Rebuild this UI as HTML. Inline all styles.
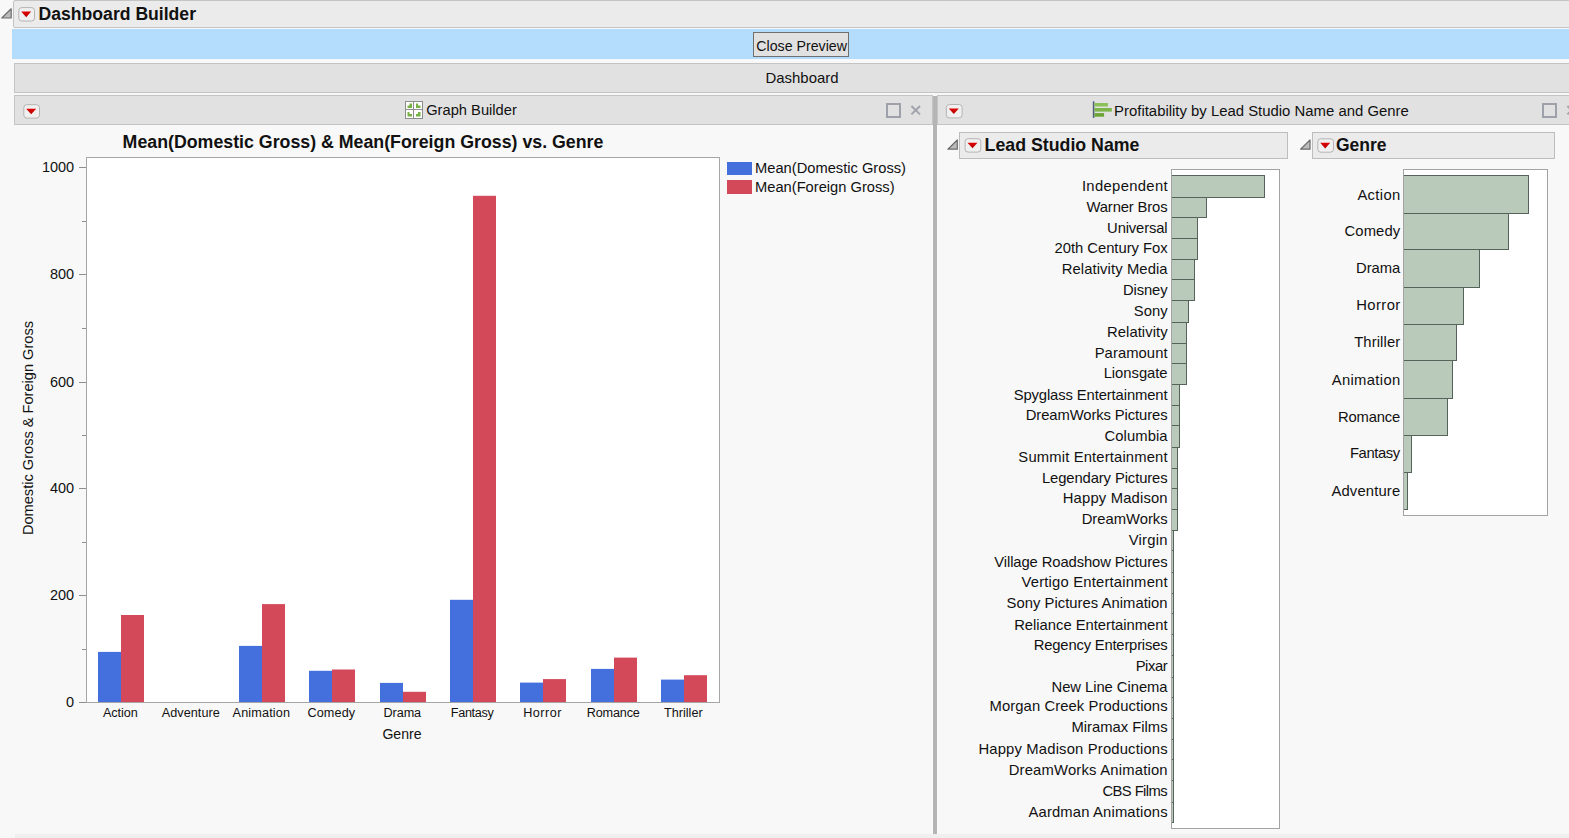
<!DOCTYPE html>
<html><head><meta charset="utf-8"><title>Dashboard Builder</title>
<style>
html,body{margin:0;padding:0;}
body{width:1569px;height:838px;overflow:hidden;background:#f8f8f8;font-family:"Liberation Sans", sans-serif;color:#111;position:relative;}
.abs{position:absolute;}
.t{position:absolute;white-space:nowrap;line-height:1;}
.bar{position:absolute;box-sizing:border-box;border:1px solid #c4c4c4;}
.hb{position:absolute;box-sizing:border-box;background:#b9c9ba;border:1px solid #56635a;}
.lab{position:absolute;white-space:nowrap;line-height:1;text-align:right;font-size:14.8px;}
</style></head><body>
<svg width="0" height="0" style="position:absolute"><defs><linearGradient id="rg" x1="0" y1="0" x2="0" y2="1"><stop offset="0" stop-color="#e40000"/><stop offset="1" stop-color="#b00000"/></linearGradient></defs></svg>

<div class="bar" style="left:13px;top:0;width:1570px;height:28px;background:#ebebeb;border-radius:2px"></div>
<svg class="abs" style="left:0px;top:7px" width="14" height="14" viewBox="0 0 14 14"><path d="M11.20 1.80V11.00H1.80Z" fill="#bcbcbc" stroke="#6c6c6c" stroke-width="1.2" stroke-linejoin="round"/></svg>
<svg class="abs" style="left:17px;top:6px" width="21" height="18" viewBox="0 0 21 18"><rect x="1.80" y="1.60" width="15.70" height="13.40" rx="3" fill="#f0f0f0" stroke="#b4b4b4"/><path d="M4.20 5.60H14.20L9.20 11.20Z" fill="url(#rg)"/></svg>
<div class="t" style="left:38.6px;top:6.4px;font-size:17.6px;font-weight:bold;">Dashboard Builder</div>
<div class="abs" style="left:12px;top:29px;width:1557px;height:30px;background:#b3dcfd"></div>
<div class="abs" style="left:753px;top:32px;width:96px;height:25px;box-sizing:border-box;border:1px solid #707070;background:#e1e1e1"></div>
<div class="t" style="left:756.3px;top:39.4px;font-size:14.2px;">Close Preview</div>
<div class="bar" style="left:14px;top:63px;width:1570px;height:30px;background:#e1e1e1"></div>
<div class="t" style="left:765.5px;top:71.1px;font-size:14.95px;">Dashboard</div>
<div class="bar" style="left:14px;top:95px;width:919px;height:30px;background:#e1e1e1"></div>
<svg class="abs" style="left:22px;top:103px" width="21" height="18" viewBox="0 0 21 18"><rect x="1.80" y="1.70" width="15.70" height="13.40" rx="3" fill="#f0f0f0" stroke="#b4b4b4"/><path d="M4.20 5.70H14.20L9.20 11.30Z" fill="url(#rg)"/></svg>
<svg class="abs" style="left:405px;top:101px" width="18" height="18" viewBox="0 0 18 18">
<rect x="0.5" y="0.5" width="17" height="17" fill="#fff" stroke="#8c8c8c"/>
<path d="M8.5 0.5V17.5M0.5 8.5H17.5" stroke="#8c8c8c" stroke-width="1"/>
<path d="M2.5 7V4.5H4.5V2.5H7V7Z" fill="#78b043"/>
<path d="M11 2.5H13V4.5H15.5V7H11Z" fill="#78b043"/>
<path d="M2.5 11H4.5V13H7V15.5H2.5Z" fill="#78b043"/>
<path d="M11 15.5V13H13V11H15.5V15.5Z" fill="#78b043"/>
</svg>
<div class="t" style="left:426.2px;top:102.5px;font-size:14.7px;">Graph Builder</div>
<div class="abs" style="left:886px;top:103px;width:15px;height:15px;box-sizing:border-box;border:2px solid #9ea1aa"></div>
<svg class="abs" style="left:910px;top:104px" width="12" height="12" viewBox="0 0 12 12"><path d="M1.4 2L10 10.4M10 2L1.4 10.4" stroke="#a1a4ac" stroke-width="2" fill="none"/></svg>
<div class="abs" style="left:932px;top:125px;width:6px;height:709px;background:#fbfbfb"></div>
<div class="abs" style="left:933px;top:96px;width:4px;height:738px;background:#b5b5b5"></div>
<div class="bar" style="left:937px;top:95px;width:700px;height:30px;background:#e1e1e1"></div>
<svg class="abs" style="left:944px;top:103px" width="21" height="18" viewBox="0 0 21 18"><rect x="2.40" y="1.50" width="15.70" height="13.40" rx="3" fill="#f0f0f0" stroke="#b4b4b4"/><path d="M4.80 5.50H14.80L9.80 11.10Z" fill="url(#rg)"/></svg>
<svg class="abs" style="left:1092px;top:101px" width="21" height="18" viewBox="0 0 21 18">
<rect x="0.8" y="0.3" width="1.6" height="16.6" fill="#4f607a"/>
<rect x="2.4" y="2" width="13.5" height="3.5" fill="#8cc15a"/>
<rect x="2.4" y="7" width="17.4" height="3.6" fill="#7db548"/>
<rect x="2.4" y="12.1" width="9.7" height="3.6" fill="#6ba535"/>
</svg>
<div class="t" style="left:1114.1px;top:103.6px;font-size:14.9px;">Profitability by Lead Studio Name and Genre</div>
<div class="abs" style="left:1542px;top:103px;width:15px;height:15px;box-sizing:border-box;border:2px solid #9ea1aa"></div>
<svg class="abs" style="left:1566px;top:104px" width="12" height="12" viewBox="0 0 12 12"><path d="M1.4 2L10 10.4M10 2L1.4 10.4" stroke="#a1a4ac" stroke-width="2" fill="none"/></svg>
<div class="t" style="left:122.6px;top:133.6px;font-size:17.78px;font-weight:bold;">Mean(Domestic Gross) &amp; Mean(Foreign Gross) vs. Genre</div>
<div class="abs" style="left:86px;top:157px;width:634px;height:545.5px;box-sizing:border-box;background:#fff;border:1px solid #a6a6a6"></div>
<div class="abs" style="left:79px;top:702px;width:7px;height:1px;background:#8f8f8f"></div>
<div class="lab" style="left:20px;width:54.2px;top:695.2px;font-size:14.5px">0</div>
<div class="abs" style="left:82px;top:649px;width:4px;height:1px;background:#8f8f8f"></div>
<div class="abs" style="left:79px;top:595px;width:7px;height:1px;background:#8f8f8f"></div>
<div class="lab" style="left:20px;width:54.2px;top:588.2px;font-size:14.5px">200</div>
<div class="abs" style="left:82px;top:542px;width:4px;height:1px;background:#8f8f8f"></div>
<div class="abs" style="left:79px;top:488px;width:7px;height:1px;background:#8f8f8f"></div>
<div class="lab" style="left:20px;width:54.2px;top:481.2px;font-size:14.5px">400</div>
<div class="abs" style="left:82px;top:435px;width:4px;height:1px;background:#8f8f8f"></div>
<div class="abs" style="left:79px;top:382px;width:7px;height:1px;background:#8f8f8f"></div>
<div class="lab" style="left:20px;width:54.2px;top:375.2px;font-size:14.5px">600</div>
<div class="abs" style="left:82px;top:328px;width:4px;height:1px;background:#8f8f8f"></div>
<div class="abs" style="left:79px;top:274px;width:7px;height:1px;background:#8f8f8f"></div>
<div class="lab" style="left:20px;width:54.2px;top:267.2px;font-size:14.5px">800</div>
<div class="abs" style="left:82px;top:221px;width:4px;height:1px;background:#8f8f8f"></div>
<div class="abs" style="left:79px;top:167px;width:7px;height:1px;background:#8f8f8f"></div>
<div class="lab" style="left:20px;width:54.2px;top:160.2px;font-size:14.5px">1000</div>
<svg class="abs" style="left:0;top:0" width="940" height="838" viewBox="0 0 940 838">
<rect x="98" y="651.9" width="23" height="50.1" fill="#4370dc"/>
<rect x="121" y="615.0" width="23" height="87.0" fill="#d4495a"/>
<rect x="239" y="645.9" width="23" height="56.1" fill="#4370dc"/>
<rect x="262" y="604.1" width="23" height="97.9" fill="#d4495a"/>
<rect x="309" y="670.8" width="23" height="31.2" fill="#4370dc"/>
<rect x="332" y="669.5" width="23" height="32.5" fill="#d4495a"/>
<rect x="380" y="682.9" width="23" height="19.1" fill="#4370dc"/>
<rect x="403" y="691.8" width="23" height="10.2" fill="#d4495a"/>
<rect x="450" y="599.8" width="23" height="102.2" fill="#4370dc"/>
<rect x="473" y="195.8" width="23" height="506.2" fill="#d4495a"/>
<rect x="520" y="682.6" width="23" height="19.4" fill="#4370dc"/>
<rect x="543" y="679.1" width="23" height="22.9" fill="#d4495a"/>
<rect x="591" y="668.9" width="23" height="33.1" fill="#4370dc"/>
<rect x="614" y="657.6" width="23" height="44.4" fill="#d4495a"/>
<rect x="661" y="679.6" width="23" height="22.4" fill="#4370dc"/>
<rect x="684" y="675.2" width="23" height="26.8" fill="#d4495a"/>
</svg>
<div class="t" style="left:80.27px;width:80px;text-align:center;top:707.2px;font-size:12.65px;letter-spacing:-0.06px">Action</div>
<div class="t" style="left:150.82px;width:80px;text-align:center;top:707.2px;font-size:12.65px;letter-spacing:0.04px">Adventure</div>
<div class="t" style="left:221.38px;width:80px;text-align:center;top:707.2px;font-size:12.65px;letter-spacing:0.16px">Animation</div>
<div class="t" style="left:291.36px;width:80px;text-align:center;top:707.2px;font-size:12.65px;letter-spacing:0.12px">Comedy</div>
<div class="t" style="left:362.27px;width:80px;text-align:center;top:707.2px;font-size:12.65px;letter-spacing:-0.05px">Drama</div>
<div class="t" style="left:432.13px;width:80px;text-align:center;top:707.2px;font-size:12.65px;letter-spacing:-0.34px">Fantasy</div>
<div class="t" style="left:502.55px;width:80px;text-align:center;top:707.2px;font-size:12.65px;letter-spacing:0.50px">Horror</div>
<div class="t" style="left:573.22px;width:80px;text-align:center;top:707.2px;font-size:12.65px;letter-spacing:-0.16px">Romance</div>
<div class="t" style="left:643.31px;width:80px;text-align:center;top:707.2px;font-size:12.65px;letter-spacing:0.02px">Thriller</div>
<div class="t" style="left:382.4px;top:726.9px;font-size:14.1px;">Genre</div>
<div class="t" style="left:27.5px;top:428.4px;font-size:14.6px;transform:translate(-50%,-50%) rotate(-90deg);">Domestic Gross &amp; Foreign Gross</div>
<div class="abs" style="left:727px;top:162px;width:25px;height:13px;background:#4370dc"></div>
<div class="abs" style="left:727px;top:180px;width:25px;height:14px;background:#d4495a"></div>
<div class="t" style="left:755px;top:160.5px;font-size:14.7px;">Mean(Domestic Gross)</div>
<div class="t" style="left:755px;top:180.2px;font-size:14.7px;">Mean(Foreign Gross)</div>
<div class="bar" style="left:959px;top:132px;width:329px;height:27px;background:#ebebeb;border-color:#bdbdbd"></div>
<svg class="abs" style="left:946px;top:138px" width="14" height="14" viewBox="0 0 14 14"><path d="M11.30 2.00V11.20H1.90Z" fill="#bcbcbc" stroke="#6c6c6c" stroke-width="1.2" stroke-linejoin="round"/></svg>
<svg class="abs" style="left:963px;top:137px" width="21" height="18" viewBox="0 0 21 18"><rect x="2.10" y="1.70" width="15.70" height="13.40" rx="3" fill="#f0f0f0" stroke="#b4b4b4"/><path d="M4.50 5.70H14.50L9.50 11.30Z" fill="url(#rg)"/></svg>
<div class="t" style="left:984.6px;top:137.4px;font-size:17.75px;font-weight:bold;">Lead Studio Name</div>
<div class="abs" style="left:1171px;top:169px;width:109px;height:660px;background:#fff"></div>
<div class="hb" style="left:1171px;top:175px;width:94px;height:23px"></div>
<div class="lab" style="left:940px;width:227.94px;top:178.5px;letter-spacing:0.34px;">Independent</div>
<div class="hb" style="left:1171px;top:197px;width:36px;height:21px"></div>
<div class="lab" style="left:940px;width:227.46px;top:199.5px;letter-spacing:-0.14px;">Warner Bros</div>
<div class="hb" style="left:1171px;top:217px;width:27px;height:22px"></div>
<div class="lab" style="left:940px;width:227.45px;top:220.6px;letter-spacing:-0.15px;">Universal</div>
<div class="hb" style="left:1171px;top:238px;width:27px;height:22px"></div>
<div class="lab" style="left:940px;width:227.57px;top:240.6px;letter-spacing:-0.03px;">20th Century Fox</div>
<div class="hb" style="left:1171px;top:259px;width:24px;height:21px"></div>
<div class="lab" style="left:940px;width:227.70px;top:262.4px;letter-spacing:0.10px;">Relativity Media</div>
<div class="hb" style="left:1171px;top:279px;width:24px;height:22px"></div>
<div class="lab" style="left:940px;width:227.49px;top:283.4px;letter-spacing:-0.11px;">Disney</div>
<div class="hb" style="left:1171px;top:300px;width:18px;height:23px"></div>
<div class="lab" style="left:940px;width:227.64px;top:303.9px;letter-spacing:0.04px;">Sony</div>
<div class="hb" style="left:1171px;top:322px;width:16px;height:22px"></div>
<div class="lab" style="left:940px;width:227.66px;top:324.8px;letter-spacing:0.06px;">Relativity</div>
<div class="hb" style="left:1171px;top:343px;width:16px;height:21px"></div>
<div class="lab" style="left:940px;width:227.67px;top:345.5px;letter-spacing:0.07px;">Paramount</div>
<div class="hb" style="left:1171px;top:363px;width:16px;height:22px"></div>
<div class="lab" style="left:940px;width:227.57px;top:365.9px;letter-spacing:-0.03px;">Lionsgate</div>
<div class="hb" style="left:1171px;top:384px;width:9px;height:22px"></div>
<div class="lab" style="left:940px;width:227.49px;top:387.5px;letter-spacing:-0.11px;">Spyglass Entertainment</div>
<div class="hb" style="left:1171px;top:405px;width:9px;height:21px"></div>
<div class="lab" style="left:940px;width:227.50px;top:408.3px;letter-spacing:-0.10px;">DreamWorks Pictures</div>
<div class="hb" style="left:1171px;top:425px;width:9px;height:23px"></div>
<div class="lab" style="left:940px;width:227.70px;top:428.7px;letter-spacing:0.10px;">Columbia</div>
<div class="hb" style="left:1171px;top:447px;width:7px;height:22px"></div>
<div class="lab" style="left:940px;width:227.75px;top:449.6px;letter-spacing:0.15px;">Summit Entertainment</div>
<div class="hb" style="left:1171px;top:468px;width:7px;height:21px"></div>
<div class="lab" style="left:940px;width:227.49px;top:470.6px;letter-spacing:-0.11px;">Legendary Pictures</div>
<div class="hb" style="left:1171px;top:488px;width:7px;height:22px"></div>
<div class="lab" style="left:940px;width:227.77px;top:490.8px;letter-spacing:0.17px;">Happy Madison</div>
<div class="hb" style="left:1171px;top:509px;width:7px;height:22px"></div>
<div class="lab" style="left:940px;width:227.59px;top:512.4px;letter-spacing:-0.01px;">DreamWorks</div>
<div class="hb" style="left:1171px;top:530px;width:3px;height:21px"></div>
<div class="lab" style="left:940px;width:227.87px;top:533.1px;letter-spacing:0.27px;">Virgin</div>
<div class="hb" style="left:1171px;top:550px;width:3px;height:23px"></div>
<div class="lab" style="left:940px;width:227.50px;top:554.6px;letter-spacing:-0.10px;">Village Roadshow Pictures</div>
<div class="hb" style="left:1171px;top:572px;width:3px;height:22px"></div>
<div class="lab" style="left:940px;width:227.79px;top:574.5px;letter-spacing:0.19px;">Vertigo Entertainment</div>
<div class="hb" style="left:1171px;top:593px;width:3px;height:21px"></div>
<div class="lab" style="left:940px;width:227.63px;top:595.5px;letter-spacing:0.03px;">Sony Pictures Animation</div>
<div class="hb" style="left:1171px;top:613px;width:3px;height:22px"></div>
<div class="lab" style="left:940px;width:227.58px;top:617.6px;letter-spacing:-0.02px;">Reliance Entertainment</div>
<div class="hb" style="left:1171px;top:634px;width:3px;height:22px"></div>
<div class="lab" style="left:940px;width:227.40px;top:637.8px;letter-spacing:-0.20px;">Regency Enterprises</div>
<div class="hb" style="left:1171px;top:655px;width:3px;height:23px"></div>
<div class="lab" style="left:940px;width:227.14px;top:658.5px;letter-spacing:-0.46px;">Pixar</div>
<div class="hb" style="left:1171px;top:677px;width:3px;height:21px"></div>
<div class="lab" style="left:940px;width:227.55px;top:679.5px;letter-spacing:-0.05px;">New Line Cinema</div>
<div class="hb" style="left:1171px;top:697px;width:3px;height:22px"></div>
<div class="lab" style="left:940px;width:227.69px;top:699.4px;letter-spacing:0.09px;">Morgan Creek Productions</div>
<div class="hb" style="left:1171px;top:718px;width:3px;height:22px"></div>
<div class="lab" style="left:940px;width:227.59px;top:720.4px;letter-spacing:-0.01px;">Miramax Films</div>
<div class="hb" style="left:1171px;top:739px;width:3px;height:21px"></div>
<div class="lab" style="left:940px;width:227.77px;top:742.4px;letter-spacing:0.17px;">Happy Madison Productions</div>
<div class="hb" style="left:1171px;top:759px;width:3px;height:22px"></div>
<div class="lab" style="left:940px;width:227.80px;top:762.7px;letter-spacing:0.20px;">DreamWorks Animation</div>
<div class="hb" style="left:1171px;top:780px;width:3px;height:23px"></div>
<div class="lab" style="left:940px;width:227.00px;top:783.7px;letter-spacing:-0.60px;">CBS Films</div>
<div class="hb" style="left:1171px;top:802px;width:3px;height:21px"></div>
<div class="lab" style="left:940px;width:227.75px;top:804.7px;letter-spacing:0.15px;">Aardman Animations</div>
<div class="abs" style="left:1171px;top:169px;width:109px;height:660px;box-sizing:border-box;border:1px solid #a3a3a3"></div>
<div class="bar" style="left:1312px;top:132px;width:243px;height:27px;background:#ebebeb;border-color:#bdbdbd"></div>
<svg class="abs" style="left:1298px;top:138px" width="14" height="14" viewBox="0 0 14 14"><path d="M12.00 2.00V11.20H2.60Z" fill="#bcbcbc" stroke="#6c6c6c" stroke-width="1.2" stroke-linejoin="round"/></svg>
<svg class="abs" style="left:1316px;top:137px" width="21" height="18" viewBox="0 0 21 18"><rect x="1.80" y="1.80" width="15.70" height="13.40" rx="3" fill="#f0f0f0" stroke="#b4b4b4"/><path d="M4.20 5.80H14.20L9.20 11.40Z" fill="url(#rg)"/></svg>
<div class="t" style="left:1336.0px;top:136.5px;font-size:17.5px;font-weight:bold;">Genre</div>
<div class="abs" style="left:1403px;top:169px;width:145px;height:347px;background:#fff"></div>
<div class="hb" style="left:1403px;top:175px;width:126px;height:39px"></div>
<div class="lab" style="left:1290px;width:110.53px;top:188.1px;letter-spacing:0.33px;">Action</div>
<div class="hb" style="left:1403px;top:213px;width:106px;height:37px"></div>
<div class="lab" style="left:1290px;width:110.31px;top:224.2px;letter-spacing:0.11px;">Comedy</div>
<div class="hb" style="left:1403px;top:249px;width:77px;height:39px"></div>
<div class="lab" style="left:1290px;width:110.12px;top:260.7px;letter-spacing:-0.08px;">Drama</div>
<div class="hb" style="left:1403px;top:287px;width:61px;height:38px"></div>
<div class="lab" style="left:1290px;width:110.61px;top:298.4px;letter-spacing:0.41px;">Horror</div>
<div class="hb" style="left:1403px;top:324px;width:54px;height:37px"></div>
<div class="lab" style="left:1290px;width:110.32px;top:335.3px;letter-spacing:0.12px;">Thriller</div>
<div class="hb" style="left:1403px;top:360px;width:50px;height:39px"></div>
<div class="lab" style="left:1290px;width:110.54px;top:373.0px;letter-spacing:0.34px;">Animation</div>
<div class="hb" style="left:1403px;top:398px;width:45px;height:38px"></div>
<div class="lab" style="left:1290px;width:110.02px;top:410.4px;letter-spacing:-0.18px;">Romance</div>
<div class="hb" style="left:1403px;top:435px;width:9px;height:38px"></div>
<div class="lab" style="left:1290px;width:109.81px;top:445.5px;letter-spacing:-0.39px;">Fantasy</div>
<div class="hb" style="left:1403px;top:472px;width:5px;height:38px"></div>
<div class="lab" style="left:1290px;width:110.36px;top:484.1px;letter-spacing:0.16px;">Adventure</div>
<div class="abs" style="left:1403px;top:169px;width:145px;height:347px;box-sizing:border-box;border:1px solid #a3a3a3"></div>
<div class="abs" style="left:15px;top:834px;width:1554px;height:4px;background:#efefef"></div>
</body></html>
